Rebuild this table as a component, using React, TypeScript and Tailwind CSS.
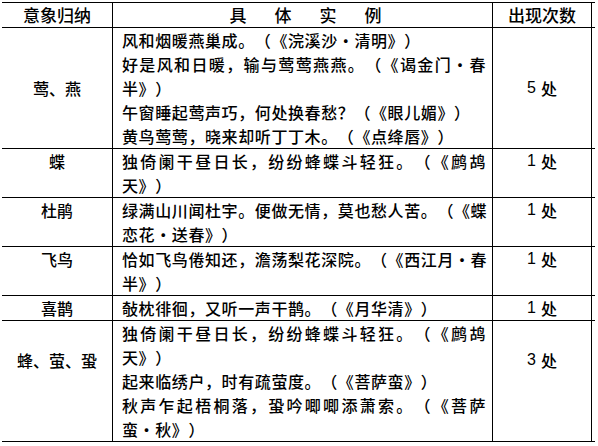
import React from "react";

type Line = { text: string; justify?: boolean };

interface Row {
  label: string;
  count: string;
  lines: Line[];
  align: "center" | "top" | "offset";
}

const rows: Row[] = [
  {
    label: "莺、燕",
    count: "5",
    align: "center",
    lines: [
      { text: "风和烟暖燕巢成。（《浣溪沙·清明》）" },
      { text: "好是风和日暖，输与莺莺燕燕。（《谒金门·春", justify: true },
      { text: "半》）" },
      { text: "午窗睡起莺声巧，何处换春愁？（《眼儿媚》）" },
      { text: "黄鸟莺莺，晓来却听丁丁木。（《点绛唇》）" },
    ],
  },
  {
    label: "蝶",
    count: "1",
    align: "top",
    lines: [
      { text: "独倚阑干昼日长，纷纷蜂蝶斗轻狂。（《鹧鸪", justify: true },
      { text: "天》）" },
    ],
  },
  {
    label: "杜鹃",
    count: "1",
    align: "top",
    lines: [
      { text: "绿满山川闻杜宇。便做无情，莫也愁人苦。（《蝶", justify: true },
      { text: "恋花·送春》）" },
    ],
  },
  {
    label: "飞鸟",
    count: "1",
    align: "top",
    lines: [
      { text: "恰如飞鸟倦知还，澹荡梨花深院。（《西江月·春", justify: true },
      { text: "半》）" },
    ],
  },
  {
    label: "喜鹊",
    count: "1",
    align: "top",
    lines: [{ text: "敧枕徘徊，又听一声干鹊。（《月华清》）" }],
  },
  {
    label: "蜂、萤、蛩",
    count: "3",
    align: "offset",
    lines: [
      { text: "独倚阑干昼日长，纷纷蜂蝶斗轻狂。（《鹧鸪", justify: true },
      { text: "天》）" },
      { text: "起来临绣户，时有疏萤度。（《菩萨蛮》）" },
      { text: "秋声乍起梧桐落，蛩吟唧唧添萧索。（《菩萨", justify: true },
      { text: "蛮·秋》）" },
    ],
  },
];

const sideCell = (align: Row["align"]) =>
  align === "center"
    ? "flex items-center justify-center"
    : align === "offset"
    ? "flex justify-center pt-[27px]"
    : "flex justify-center";

const App: React.FC = () => {
  return (
    <div className="w-[598px] h-[446px] bg-white pt-[2px] pl-[2px] font-['Noto_Sans_CJK_SC',sans-serif] font-medium text-black [text-spacing-trim:space-all]">
      <div className="w-[593px] border-t border-black">
        <div className="flex border-b border-black text-[17px] leading-[24px]">
          <div className="w-[110px] flex justify-center">意象归纳</div>
          <div className="w-[380px] border-l border-black flex justify-center gap-[28px] pl-[6px]">
            <span>具</span>
            <span>体</span>
            <span>实</span>
            <span>例</span>
          </div>
          <div className="w-[100px] border-x border-black flex justify-center">出现次数</div>
        </div>
        {rows.map((r) => (
          <div key={r.label + r.count + r.lines[0].text} className="flex border-b border-black text-[16px] leading-[24px]">
            <div className={`w-[110px] ${sideCell(r.align)}`}>
              <span className="leading-[24px]">{r.label}</span>
            </div>
            <div className="w-[380px] border-l border-black pl-[9px] pr-[6px] tracking-[0.6px]">
              {r.lines.map((l, i) => (
                <div
                  key={i}
                  className={`whitespace-nowrap ${l.justify ? "text-justify [text-align-last:justify]" : ""}`}
                >
                  {l.text}
                </div>
              ))}
            </div>
            <div className={`w-[100px] border-x border-black ${sideCell(r.align)}`}>
              <span className="font-['Liberation_Sans','Noto_Sans_CJK_SC',sans-serif] font-normal">
                {r.count}
              </span>
              <span className="ml-[5px]">处</span>
            </div>
          </div>
        ))}
      </div>
    </div>
  );
};

export default App;
